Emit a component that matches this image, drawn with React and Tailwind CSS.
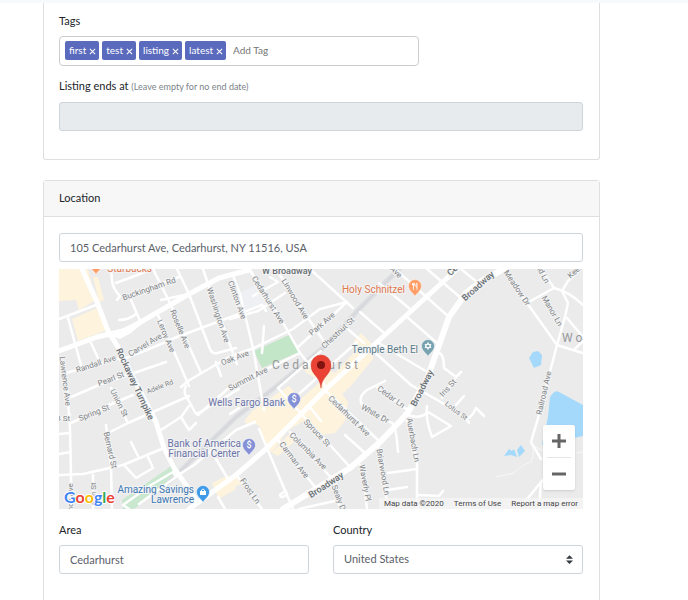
import React, { useState } from "react";

const majorRoads = [
  "M23 0L38 33L49 62L59 78L75 110L97 153L105 179L115 199L127 216L138 232",
  "M0 82L38 68L64 62L80 54L130 25L160 9L190 1",
  "M130 240L177 206L208 179L268 119L351 43L398 0",
];

const broadway = "M224 240L291 199L320 174L348 145L368 110L390 48L407 24L424 11L445 0";

const minorRoads = [
  "M52 0L53 12Q54 20 61 27L58 31",
  "M64 28L120 8",
  "M57 14L94 0L109 30L142 104",
  "M72 31L82 54",
  "M60 51Q70 51 77 45",
  "M102 31L130 25",
  "M118 0L130 25L151 80Q153 85 158 84L177 79",
  "M144 0L150 18L178 95",
  "M157 93L162 107",
  "M99 46L104 57L130 117",
  "M61 91L88 81L118 68L177 46L203 36L207 42",
  "M122 118L129 112L170 88L195 79L234 60L261 40L288 33",
  "M139 146L171 118L241 84",
  "M203 84L205 57",
  "M171 50L199 42L226 24",
  "M0 50L37 36",
  "M9 49L22 96",
  "M32 74L39 89",
  "M7 104L61 89",
  "M0 89L8 118L11 160L12 206L12 240",
  "M10 129L40 116L107 93",
  "M12 154L50 136L74 126",
  "M0 150L11 146",
  "M52 119L69 154",
  "M49 164L69 154L130 127",
  "M127 117Q125 120 126 125L137 145L143 142L180 120",
  "M102 161L122 148L130 137",
  "M122 148L130 161L137 154",
  "M47 156L52 196L53 240",
  "M0 206L24 205L64 196L105 179",
  "M65 196L77 209L94 199L89 188",
  "M72 173L79 187",
  "M34 206L34 240",
  "M0 165L11 164",
  "M0 185L12 183",
  "M70 240L64 236L92 216L114 203L117 208L80 235",
  "M116 208L135 196L177 161L196 153",
  "M157 190L169 210L177 206",
  "M159 228L166 240",
  "M173 4L181 25L194 79L205 141",
  "M191 1L222 50L241 84L264 113",
  "M221 6L249 49L266 74",
  "M251 0L294 39",
  "M239 78L288 33",
  "M194 27L219 13L211 8",
  "M301 43L324 63",
  "M284 56L305 74",
  "M219 119L262 82",
  "M241 124L298 73",
  "M320 14L351 40",
  "M336 0L390 48",
  "M368 0L402 29",
  "M402 0L418 13",
  "M348 48L378 74",
  "M318 73L370 104",
  "M312 80L352 116",
  "M445 3L468 34L498 76Q510 80 524 84",
  "M468 34L495 19L482 0",
  "M495 19Q511 23 524 36",
  "M522 0L509 12L503 22L509 34L506 48L498 76L487 118L480 146L472 173L482 190",
  "M508 49L524 68",
  "M524 72L516 80",
  "M380 84Q385 85 385 99L397 108L402 103",
  "M397 108L383 129",
  "M352 116L380 132L407 149L410 154",
  "M397 136L405 127",
  "M407 149Q412 150 417 139L425 147",
  "M368 137Q366 149 373 168L392 157L369 143",
  "M345 144Q360 152 369 143",
  "M347 148L358 193L358 240",
  "M329 204L358 200",
  "M358 226L380 227L384 222",
  "M460 240L482 213L480 240",
  "M482 213L495 200",
  "M200 160L208 179L219 205L234 240",
  "M219 119L291 198",
  "M231 163L276 213L281 240",
  "M219 171L256 218",
  "M264 113L268 123L319 171",
  "M250 137L262 152",
  "M326 112L308 121Q300 127 302 133Q303 139 312 143L333 154Q337 156 339 183",
  "M318 118L351 143",
  "M286 166L306 184",
  "M301 196L304 205L308 240",
  "M319 176L329 240",
  "M179 208L203 240",
  "M329 221L348 218",
  "M171 145L180 139",
  "M240 240L280 231",
  "M221 226Q229 219 227 226Q222 230 221 226",
];

const railway = "M110 213L177 148L218 117L264 79L304 36L340 0";

const paths = [
  "M437 208L455 204Q462 196 472 193Q475 188 474 178",
  "M472 173Q485 190 524 183",
];

// x and y are the middle of each street name
const streetLabels = [
  { text: "Buckingham Rd", x: 90, y: 20, angle: -19 },
  { text: "Washington Ave", x: 159, y: 46, angle: 72 },
  { text: "Clinton Ave", x: 178, y: 31, angle: 70 },
  { text: "Roselle Ave", x: 121, y: 60, angle: 68 },
  { text: "Leroy Ave", x: 107, y: 67, angle: 67 },
  { text: "Carvel Ave", x: 86, y: 76, angle: -31 },
  { text: "Randall Ave", x: 37, y: 95, angle: -18 },
  { text: "Pearl St", x: 52, y: 110, angle: -21 },
  { text: "Adele Rd", x: 101, y: 118, angle: -21, size: 7 },
  { text: "Spring St", x: 35, y: 144, angle: -22 },
  { text: "Union St", x: 60, y: 134, angle: 63 },
  { text: "Bernard St", x: 51, y: 181, angle: 77 },
  { text: "Lawrence Ave", x: 6, y: 112, angle: 83 },
  { text: "68 St", x: 2, y: 149, angle: 0 },
  { text: "Ann St", x: 34, y: 225, angle: -90 },
  { text: "Lawrence Ave", x: 11, y: 239, angle: -90 },
  { text: "Oak Ave", x: 176, y: 89, angle: -21 },
  { text: "Summit Ave", x: 189, y: 110, angle: -27 },
  { text: "Cedarhurst Ave", x: 209, y: 31, angle: 58 },
  { text: "Linwood Ave", x: 236, y: 30, angle: 59 },
  { text: "Park Ave", x: 263, y: 55, angle: -41 },
  { text: "Chestnut St", x: 279, y: 64, angle: -43 },
  { text: "Ave", x: 337, y: 3, angle: 45 },
  { text: "Meadow Dr", x: 458, y: 19, angle: 56 },
  { text: "Manor Ln", x: 493, y: 42, angle: 60 },
  { text: "Wood Ln", x: 481, y: 0, angle: 62 },
  { text: "Keene Ln", x: 522, y: -3, angle: -42 },
  { text: "Iris St", x: 389, y: 119, angle: -48 },
  { text: "Lotus St", x: 397, y: 142, angle: 37, size: 7 },
  { text: "Railroad Ave", x: 485, y: 124, angle: -77 },
  { text: "Auerbach Ln", x: 354, y: 171, angle: 80 },
  { text: "Cedar Ln", x: 332, y: 128, angle: 36 },
  { text: "White Dr", x: 316, y: 145, angle: 29 },
  { text: "Cedarhurst Ave", x: 290, y: 147, angle: 44 },
  { text: "Spruce St", x: 258, y: 164, angle: 46 },
  { text: "Columbia Ave", x: 249, y: 182, angle: 45 },
  { text: "Carman Ave", x: 235, y: 191, angle: 53 },
  { text: "Frost Ln", x: 191, y: 222, angle: 55 },
  { text: "Waverly Pl", x: 306, y: 214, angle: 80 },
  { text: "Briarwood Ln", x: 324, y: 203, angle: 80 },
  { text: "Sealy Dr", x: 280, y: 230, angle: 69 },
  { text: "W Broadway", x: 228, y: 2, angle: 0, size: 9, bold: true },
  { text: "Rockaway Turnpike", x: 76, y: 115, angle: 65, size: 9, bold: true },
  { text: "Broadway", x: 419, y: 17, angle: -42, size: 9, bold: true },
  { text: "Broadway", x: 363, y: 119, angle: -63, size: 9, bold: true },
  { text: "Broadway", x: 267, y: 216, angle: -33, size: 9, bold: true },
  { text: "Cedarhurst Ave", x: 412, y: -16, angle: -43, size: 9, bold: true },
];

const placeLabels = [
  { text: "Starbucks", x: 93, y: 3, color: "#e07850" },
  { text: "Holy Schnitzel", x: 346, y: 24, color: "#e07850" },
  { text: "Temple Beth El", x: 359, y: 84, color: "#5b7b8a" },
  { text: "Wells Fargo Bank", x: 226, y: 137, color: "#6b73a8" },
  { text: "Bank of America", x: 182, y: 178, color: "#6b73a8" },
  { text: "Financial Center", x: 181, y: 188, color: "#6b73a8" },
  { text: "Amazing Savings", x: 135, y: 224, color: "#3c78b4" },
  { text: "Lawrence", x: 135, y: 234, color: "#3c78b4" },
];

const PlacePin = ({ x, y, color, children }) => (
  <g transform={`translate(${x} ${y})`}>
    <path
      d="M0 10.5C-1 7.5-6.5 5-6.5 0A6.5 6.5 0 0 1 6.5 0C6.5 5 1 7.5 0 10.5Z"
      fill={color}
      stroke="#fff"
      strokeWidth="0.5"
    />
    {children}
  </g>
);

const StreetMap = () => (
  <svg
    viewBox="0 0 524 240"
    preserveAspectRatio="xMidYMid slice"
    className="block w-full h-full font-['Roboto',sans-serif]"
    role="img"
    aria-label="Map of Cedarhurst"
  >
    <rect width="524" height="240" fill="#ebebeb" />

    {/* commercial areas */}
    <g fill="#fef3dc">
      <path d="M0 0H29L37 31L20 41L17 31L0 32Z" />
      <path d="M34 8L39 8L45 31L40 33Z" />
      <path d="M13 50L38 39L48 61L19 72Z" />
      <path d="M186 151L193 142L219 124L230 117L242 130L262 112L246 103L247 98L257 95L276 104L298 80L295 72L302 64L314 76L314 90L291 118L283 125L289 133L286 152L276 164L264 166L246 151L228 162L213 184L208 178L200 156L186 154Z" />
      <path d="M213 184L231 164L238 170L219 187Z" />
      <path d="M153 214L170 206L177 220L160 230Z" />
      <path d="M171 213L179 208L182 215L171 220Z" />
      <path d="M114 180L118 179L119 183L116 184Z" />
    </g>

    <path d="M181 24L198 15L211 36L185 41Z" fill="#eef0f4" />
    <path d="M195 82L230 66L240 83L203 99Z" fill="#c4e6c8" />
    <path d="M63 231L114 196L119 207L75 240H64Z" fill="#c9e8cf" />

    {/* water */}
    <g fill="#a5d9fb">
      <path d="M470 89L474 83L479 82L483 86L482 96L475 99Z" />
      <path d="M445 187L450 180L453 182L455 180L458 188L452 186Z" />
      <path d="M458 181L462 176L466 182L460 188Z" />
      <path d="M483 175L489 148L491 128Q496 120 500 123L524 136V167L484 176Z" />
    </g>

    <g fill="none" strokeLinecap="round" strokeLinejoin="round">
      <path d={railway} stroke="#dcdde0" strokeWidth="5" />
      <path d={railway} stroke="#d0d2d6" strokeWidth="1" />
      <g stroke="#fff" strokeWidth="2.5">
        {minorRoads.map((d) => (
          <path key={d} d={d} />
        ))}
      </g>
      <g stroke="#f8f8f8" strokeWidth="1">
        {paths.map((d) => (
          <path key={d} d={d} />
        ))}
      </g>
      <g stroke="#fff" strokeWidth="5">
        {majorRoads.map((d) => (
          <path key={d} d={d} />
        ))}
      </g>
      <path d={broadway} stroke="#fff" strokeWidth="6" />
    </g>
    <path d="M49 66L84 54L72 64L61 70Z" fill="#fff" />

    {streetLabels.map(({ text, x, y, angle, size = 8, bold }) => (
      <text
        key={`${text}-${x}`}
        transform={`translate(${x} ${y}) rotate(${angle})`}
        textAnchor="middle"
        dominantBaseline="central"
        fontSize={size}
        fontWeight={bold ? 500 : 400}
        fill={bold ? "#666d72" : "#7f8488"}
        stroke="#f3f3f3"
        strokeWidth="2"
        paintOrder="stroke"
      >
        {text}
      </text>
    ))}

    <g fontSize="12" fill="#97999d" className="tracking-[3px]">
      <text x="213" y="100">Cedarhurst</text>
      <text x="503" y="73">Wo</text>
    </g>

    {placeLabels.map(({ text, x, y, color }) => (
      <text
        key={text}
        x={x}
        y={y}
        textAnchor="end"
        fontSize="10"
        fill={color}
        stroke="#f3f3f3"
        strokeWidth="2"
        paintOrder="stroke"
      >
        {text}
      </text>
    ))}

    <PlacePin x={37} y={-5} color="#ff9e67" />
    <PlacePin x={356} y={17} color="#ff9e67">
      <path d="M-2.5-3V-1Q-1.5 1-.5-1V-3M-1.5-3V4M2 4V-3Q.5-2 1 1H2" fill="none" stroke="#fff" strokeWidth="0.8" />
    </PlacePin>
    <PlacePin x={369} y={77} color="#78a2b0">
      <path d="M0-3.5L3 1.5H-3ZM0 3.5L3-1.5H-3Z" fill="none" stroke="#fff" strokeWidth="0.9" />
    </PlacePin>
    <PlacePin x={235} y={130} color="#8491d6">
      <text textAnchor="middle" y="3" fontSize="9" fontWeight="500" fill="#fff">$</text>
    </PlacePin>
    <PlacePin x={190} y={176} color="#8491d6">
      <text textAnchor="middle" y="3" fontSize="9" fontWeight="500" fill="#fff">$</text>
    </PlacePin>
    <PlacePin x={144} y={223} color="#3f9ae8">
      <path d="M-3-1H3V3H-3Z" fill="#fff" />
      <path d="M-1.5-1V-2Q0-4 1.5-2V-1" fill="none" stroke="#fff" strokeWidth="0.9" />
    </PlacePin>

    {/* marker */}
    <path
      d="M262 119C261 107 252 106 252 96A10 10 0 0 1 272 96C272 106 263 107 262 119Z"
      fill="#ea4335"
      stroke="#d73a2e"
      strokeWidth="0.5"
    />
    <circle cx="262" cy="96" r="4" fill="#811411" />
  </svg>
);

const GoogleLogo = () => (
  <svg
    width="52"
    height="24"
    className="absolute left-1 bottom-0 font-['Lato',sans-serif]"
    fontSize="16"
    fontWeight="700"
    stroke="#fff"
    strokeWidth="2"
    paintOrder="stroke"
  >
    <text x="1" y="18">
      <tspan fill="#4285f4">G</tspan>
      <tspan fill="#ea4335">o</tspan>
      <tspan fill="#fbbc05">o</tspan>
      <tspan fill="#4285f4">g</tspan>
      <tspan fill="#34a853">l</tspan>
      <tspan fill="#ea4335">e</tspan>
    </text>
  </svg>
);

const inputClass =
  "block w-full h-[29px] px-2.5 border border-[#ced4da] rounded-[3px] text-[#5a6068] text-[11px]";
const labelClass = "block text-[11px] leading-4 text-[#212529]";

const App = () => {
  const [tags, setTags] = useState(["first", "test", "listing", "latest"]);
  const [newTag, setNewTag] = useState("");
  const [address, setAddress] = useState(
    "105 Cedarhurst Ave, Cedarhurst, NY 11516, USA"
  );
  const [area, setArea] = useState("Cedarhurst");
  const [country, setCountry] = useState("United States");

  const removeTag = (tag) => setTags((prev) => prev.filter((t) => t !== tag));

  const handleTagKey = (e) => {
    const value = newTag.trim();
    if (e.key === "Enter" && value && !tags.includes(value)) {
      setTags((prev) => [...prev, value]);
      setNewTag("");
    }
  };

  return (
    <div className="min-h-screen bg-white border-t-[3px] border-[#f8f9fb] pl-[43px] pr-[88px] font-['Lato',sans-serif]">
      <section className="border border-t-0 border-[#dfdfdf] rounded-b-[3px] pl-[15px] pr-4 pt-2.5 pb-7">
        <label htmlFor="newTag" className={labelClass}>
          Tags
        </label>
        <div className="mt-[7px] max-w-[360px] h-[30px] flex items-center gap-[3px] px-[5px] pb-px border border-[#ccc] rounded-[4px]">
          {tags.map((tag) => (
            <span
              key={tag}
              className="flex items-center gap-[3px] h-[19px] pl-1 pr-[3px] rounded-[2px] bg-[#5a6bbd] text-white text-[10px]"
            >
              {tag}
              <button type="button" aria-label={`Remove ${tag}`} onClick={() => removeTag(tag)}>
                <svg viewBox="0 0 8 8" className="w-[7px] h-[7px] mt-px" stroke="currentColor" strokeWidth="1.2">
                  <path d="M1 1L7 7M7 1L1 7" />
                </svg>
              </button>
            </span>
          ))}
          <input
            id="newTag"
            value={newTag}
            onChange={(e) => setNewTag(e.target.value)}
            onKeyDown={handleTagKey}
            placeholder="Add Tag"
            className="flex-1 min-w-0 px-1 text-[10px] text-[#555] placeholder:text-[#757575] outline-none"
          />
        </div>

        <label htmlFor="endsAt" className={`${labelClass} mt-3`}>
          Listing ends at{" "}
          <small className="text-[9px] text-[#7b838a]">(Leave empty for no end date)</small>
        </label>
        <input id="endsAt" readOnly className={`${inputClass} mt-[7px] bg-[#e7ebee]`} />
      </section>

      <section className="mt-5 border border-[#dfdfdf] rounded-[3px]">
        <h2 className="h-9 flex items-center px-[15px] bg-[#f7f7f7] border-b border-[#dfdfdf] text-[11px] text-[#212529]">
          Location
        </h2>
        <div className="pl-[15px] pr-4 pt-4 pb-10">
          <input
            aria-label="Address"
            value={address}
            onChange={(e) => setAddress(e.target.value)}
            className={inputClass}
          />

          <div className="relative mt-[7px] h-60 overflow-hidden">
            <StreetMap />
            <GoogleLogo />
            <div className="absolute right-2 bottom-[19px] w-8 flex flex-col items-center bg-white rounded-[2px] shadow text-[#666]">
              <button type="button" aria-label="Zoom in" className="w-8 h-8 flex items-center justify-center">
                <svg viewBox="0 0 14 14" className="w-3.5 h-3.5" stroke="currentColor" strokeWidth="3">
                  <path d="M7 0V14M0 7H14" />
                </svg>
              </button>
              <div className="w-6 h-px bg-[#e6e6e6]" />
              <button type="button" aria-label="Zoom out" className="w-8 h-8 flex items-center justify-center">
                <svg viewBox="0 0 14 14" className="w-3.5 h-3.5" stroke="currentColor" strokeWidth="3">
                  <path d="M0 7H14" />
                </svg>
              </button>
            </div>
            <div className="absolute right-0 bottom-0 flex gap-2.5 px-[5px] bg-[#f5f5f5]/80 font-['Roboto',sans-serif] text-[8px] leading-[11px] text-[#444]">
              <span>Map data ©2020</span>
              <a href="#terms">Terms of Use</a>
              <a href="#report">Report a map error</a>
            </div>
          </div>

          <div className="mt-[13px] grid grid-cols-2 gap-6">
            <div>
              <label htmlFor="area" className={labelClass}>
                Area
              </label>
              <input
                id="area"
                value={area}
                onChange={(e) => setArea(e.target.value)}
                className={`${inputClass} mt-[7px]`}
              />
            </div>
            <div>
              <label htmlFor="country" className={labelClass}>
                Country
              </label>
              <div className="relative mt-[7px]">
                <select
                  id="country"
                  value={country}
                  onChange={(e) => setCountry(e.target.value)}
                  className={`${inputClass} appearance-none bg-white`}
                >
                  <option>United States</option>
                  <option>Canada</option>
                </select>
                <svg
                  viewBox="0 0 4 5"
                  className="absolute right-2.5 top-2.5 w-[7px] h-[9px] pointer-events-none"
                  fill="#343a40"
                >
                  <path d="M2 0L0 2h4zm0 5L0 3h4z" />
                </svg>
              </div>
            </div>
          </div>
        </div>
      </section>
    </div>
  );
};

export default App;
